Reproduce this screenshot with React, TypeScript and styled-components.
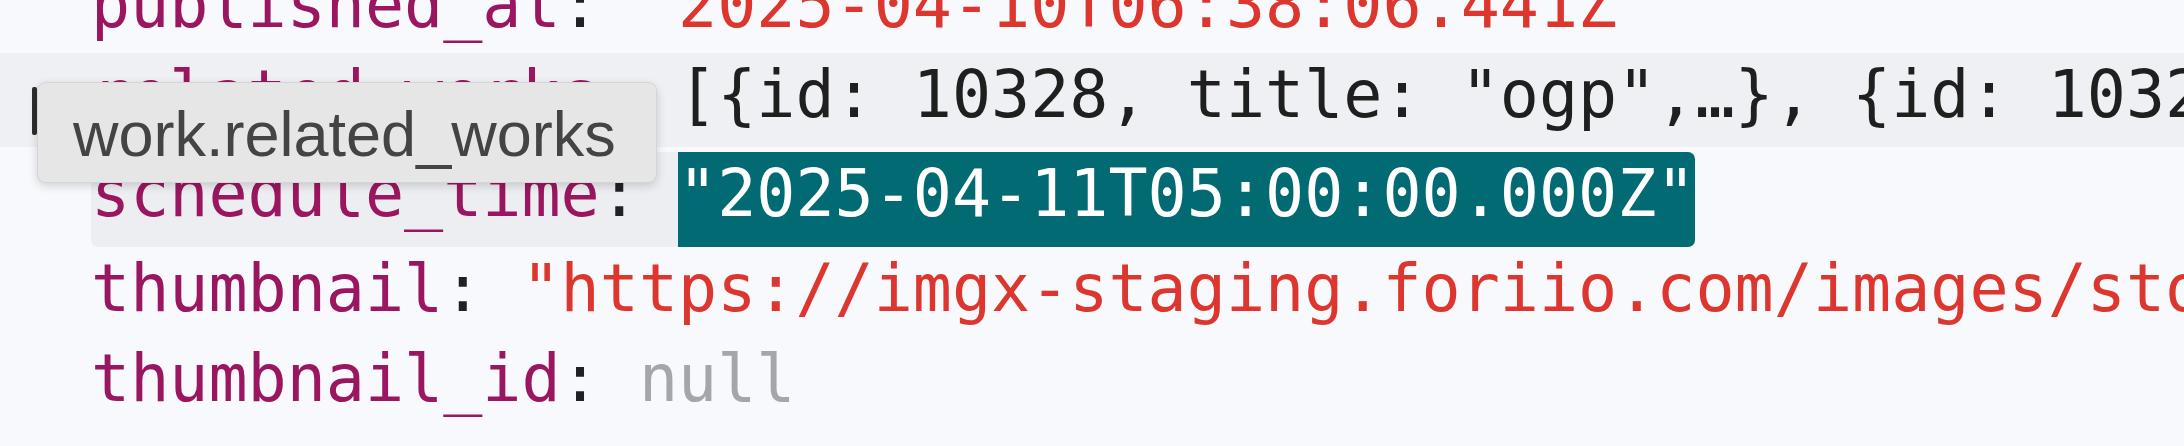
import React from "react";
import styled, { createGlobalStyle } from "styled-components";

const Global = createGlobalStyle`
  html, body {
    margin: 0;
    padding: 0;
    background: #f7f9fc;
  }
  body {
    width: 2184px;
    height: 446px;
    overflow: hidden;
  }
`;

const Viewport = styled.div`
  position: relative;
  width: 2184px;
  height: 446px;
  overflow: hidden;
  background: #f7f9fc;
  font-family: "DejaVu Sans Mono", "Liberation Mono", monospace;
  font-size: 65px;
`;

const Tree = styled.ul`
  list-style: none;
  margin: -37px 0 0;
  padding: 0;
  display: flex;
  flex-direction: column;
`;

type Variant = "normal" | "hover" | "selected";

const Row = styled.li<{ $variant: Variant }>`
  display: flex;
  align-items: flex-start;
  box-sizing: border-box;
  height: ${(p) => (p.$variant === "hover" ? 94 : p.$variant === "selected" ? 95 : 90)}px;
  margin-bottom: ${(p) => (p.$variant === "hover" ? 5 : 0)}px;
  padding-left: 91px;
  line-height: 83px;
  white-space: pre;
  overflow: hidden;
  background: ${(p) => (p.$variant === "hover" ? "#eef0f3" : "transparent")};
`;

const KeyCell = styled.span<{ $selected?: boolean }>`
  display: inline-block;
  height: ${(p) => (p.$selected ? "95px" : "auto")};
  background: ${(p) => (p.$selected ? "#eceef1" : "transparent")};
  border-radius: 7px 0 0 7px;
`;

const Key = styled.span`
  color: #9b1660;
`;

const Colon = styled.span`
  color: #202124;
`;

const Value = styled.span<{ $kind: "string" | "plain" | "null" | "match" }>`
  display: inline-block;
  height: ${(p) => (p.$kind === "match" ? "95px" : "auto")};
  color: ${(p) =>
    p.$kind === "string"
      ? "#dc362e"
      : p.$kind === "null"
      ? "#a3a7ab"
      : p.$kind === "match"
      ? "#ffffff"
      : "#1f1f1f"};
  background: ${(p) => (p.$kind === "match" ? "#016a73" : "transparent")};
  border-radius: 0 7px 7px 0;
`;

const Caret = styled.div`
  position: absolute;
  left: 32px;
  top: 87px;
  width: 5px;
  height: 48px;
  background: #2d2d2d;
  border-radius: 2px;
`;

const Tooltip = styled.div`
  position: absolute;
  left: 37px;
  top: 82px;
  box-sizing: border-box;
  width: 620px;
  height: 101px;
  padding: 16px 0 0 35px;
  background: #e7e6e6;
  border: 1px solid rgba(0, 0, 0, 0.07);
  border-radius: 9px;
  box-shadow: 0 3px 10px rgba(0, 0, 0, 0.16);
  font-family: "Liberation Sans", Arial, sans-serif;
  font-size: 63px;
  line-height: 70px;
  color: #444444;
  white-space: nowrap;
`;

type Entry = {
  name: string;
  value: string;
  kind: "string" | "plain" | "null" | "match";
  variant: Variant;
};

const entries: Entry[] = [
  {
    name: "published_at",
    value: '"2025-04-10T06:38:06.441Z"',
    kind: "string",
    variant: "normal",
  },
  {
    name: "related_works",
    value:
      '[{id: 10328, title: "ogp",…}, {id: 10329, title: "cover",…}, {id: 10330, title: "banner",…}]',
    kind: "plain",
    variant: "hover",
  },
  {
    name: "schedule_time",
    value: '"2025-04-11T05:00:00.000Z"',
    kind: "match",
    variant: "selected",
  },
  {
    name: "thumbnail",
    value:
      '"https://imgx-staging.foriio.com/images/store/4f1b2c9e0a7d/thumbnail.png"',
    kind: "string",
    variant: "normal",
  },
  {
    name: "thumbnail_id",
    value: "null",
    kind: "null",
    variant: "normal",
  },
];

export default function App() {
  return (
    <>
      <Global />
      <Viewport>
        <Tree>
          {entries.map((e) => (
            <Row key={e.name} $variant={e.variant}>
              <KeyCell $selected={e.variant === "selected"}>
                <Key>{e.name}</Key>
                <Colon>{": "}</Colon>
              </KeyCell>
              <Value $kind={e.kind}>{e.value}</Value>
            </Row>
          ))}
        </Tree>
        <Caret />
        <Tooltip>work.related_works</Tooltip>
      </Viewport>
    </>
  );
}
